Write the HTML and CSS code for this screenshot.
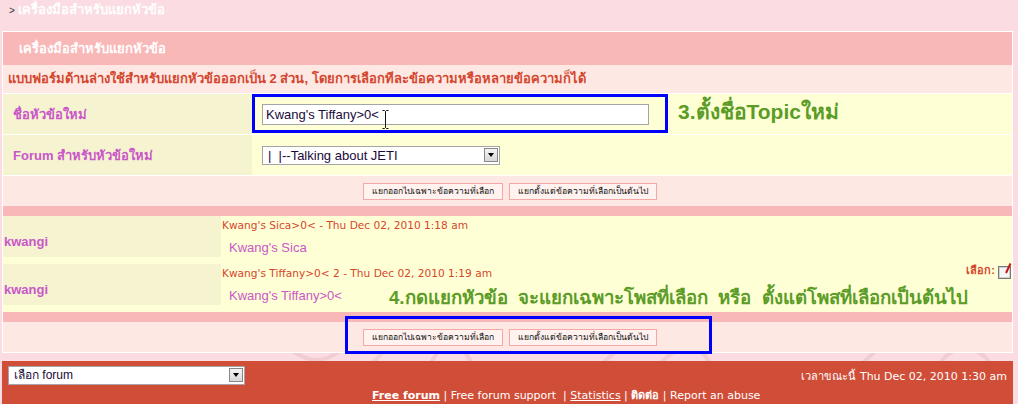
FILE: index.html
```html
<!DOCTYPE html>
<html lang="th">
<head>
    <meta charset="UTF-8">
    <title>เครื่องมือสำหรับแยกหัวข้อ</title>
    <link rel="stylesheet" href="styles.css">
</head>
<body>
    <svg class="watermark" width="760" height="40" viewBox="0 0 760 40">
        <g fill="none" stroke="#f1ccd0" stroke-width="4" stroke-linecap="round">
            <path d="M20 10 C40 30 60 38 80 20"/>
            <path d="M110 36 L140 4"/>
            <path d="M170 36 C180 10 200 10 210 30"/>
            <path d="M340 36 L372 6"/>
            <path d="M400 34 C420 12 440 12 450 34"/>
            <path d="M600 36 L630 6"/>
            <path d="M680 34 C690 14 720 14 730 34"/>
        </g>
    </svg>

    <div class="crumb"><span class="crumb-arrow">&gt;</span> <span class="crumb-text">เครื่องมือสำหรับแยกหัวข้อ</span></div>

    <div class="panel">
        <div class="head">เครื่องมือสำหรับแยกหัวข้อ</div>
        <div class="desc">แบบฟอร์มด้านล่างใช้สำหรับแยกหัวข้อออกเป็น 2 ส่วน, โดยการเลือกทีละข้อความหรือหลายข้อความก็ได้</div>

        <div class="field">
            <div class="label">ชื่อหัวข้อใหม่</div>
            <div class="value">
                <span class="textbox">Kwang's Tiffany&gt;0&lt;
                    <svg class="ibeam" width="7" height="19" viewBox="0 0 7 19">
                        <path d="M0.5 0.5 H2.5 L3.5 1.5 L4.5 0.5 H6.5 M3.5 1.5 V17.5 M0.5 18.5 H2.5 L3.5 17.5 L4.5 18.5 H6.5" stroke="#111" fill="none"/>
                    </svg>
                </span>
            </div>
        </div>
        <div class="field">
            <div class="label">Forum สำหรับหัวข้อใหม่</div>
            <div class="value"><span class="selectbox sel-forum">|&nbsp;&nbsp;|--Talking about JETI<span class="drop"></span></span></div>
        </div>
        <div class="actions">
            <span class="btn">แยกออกไปเฉพาะข้อความที่เลือก</span>
            <span class="btn">แยกตั้งแต่ข้อความที่เลือกเป็นต้นไป</span>
        </div>
        <div class="sep"></div>

        <div class="post">
            <div class="author">kwangi</div>
            <div class="post-main">
                <div class="post-title">Kwang's Sica&gt;0&lt; - Thu Dec 02, 2010 1:18 am</div>
                <div class="post-body">Kwang's Sica</div>
            </div>
        </div>
        <div class="gap"></div>
        <div class="post">
            <div class="author">kwangi</div>
            <div class="post-main">
                <div class="post-title">Kwang's Tiffany&gt;0&lt; 2 - Thu Dec 02, 2010 1:19 am</div>
                <div class="post-body">Kwang's Tiffany&gt;0&lt;</div>
                <div class="pick">เลือก:
                    <svg class="check" width="14" height="16" viewBox="0 0 14 16">
                        <rect x="0.5" y="3.5" width="12" height="12" fill="#eeeeee" stroke="#777"/>
                        <rect x="1.5" y="4.5" width="10" height="10" fill="#f6f6f6" stroke="#cfcfcf"/>
                        <path d="M8 10 L12.5 0.5" stroke="#c4161c" stroke-width="2" fill="none"/>
                    </svg>
                </div>
            </div>
        </div>
        <div class="gap"></div>
        <div class="sep"></div>
        <div class="actions">
            <span class="btn">แยกออกไปเฉพาะข้อความที่เลือก</span>
            <span class="btn">แยกตั้งแต่ข้อความที่เลือกเป็นต้นไป</span>
        </div>
    </div>

    <div class="footer">
        <div class="footer-top">
            <span class="selectbox sel-jump">เลือก forum<span class="drop"></span></span>
            <span class="clock">เวลาขณะนี้ Thu Dec 02, 2010 1:30 am</span>
        </div>
        <div class="links">
            <a class="strong">Free forum</a> | Free forum support &nbsp;| <a>Statistics</a> | <b>ติดต่อ</b> | Report an abuse
        </div>
    </div>

    <!-- คำอธิบายในภาพ -->
    <div class="mark mark-name"></div>
    <div class="mark mark-btns"></div>
    <div class="note note-name">3.ตั้งชื่อTopicใหม่</div>
    <div class="note note-split">4.กดแยกหัวข้อ&nbsp; จะแยกเฉพาะโพสที่เลือก&nbsp; หรือ&nbsp; ตั้งแต่โพสที่เลือกเป็นต้นไป</div>
</body>
</html>
```

FILE: styles.css
```css
body {
    margin: 0;
    background: #fadce2;
    font-family: "Liberation Sans", Arial, sans-serif;
    font-size: 13px;
    color: #000;
    position: relative;
    height: 404px;
    overflow: hidden;
}
.watermark {
    position: absolute;
    left: 260px;
    top: 330px;
}
.crumb {
    position: relative;
    height: 31px;
    padding-left: 9px;
    line-height: 20px;
}
.crumb-arrow {
    font-size: 10px;
    color: #333;
}
.crumb-text {
    color: #fff;
    font-weight: bold;
    font-size: 13px;
}
.panel {
    position: relative;
    margin-left: 2px;
    width: 1009px;
    border: 1px solid #fff;
    display: flex;
    flex-direction: column;
}
.head {
    height: 33px;
    line-height: 33px;
    background: #f8b8b8;
    color: #fff;
    font-weight: bold;
    padding-left: 16px;
}
.desc {
    height: 28px;
    line-height: 28px;
    background: #fde8e4;
    color: #d4462e;
    font-weight: bold;
    padding-left: 5px;
    border-bottom: 1px solid #fff;
}
.field {
    display: flex;
    height: 40px;
    border-bottom: 1px solid #fff;
}
.label {
    width: 239px;
    padding-left: 10px;
    background: #f5f3d0;
    color: #c957c9;
    font-weight: bold;
    display: flex;
    align-items: center;
}
.value {
    flex: 1;
    background: #ffffd5;
    padding-left: 10px;
    display: flex;
    align-items: center;
}
.textbox {
    position: relative;
    width: 382px;
    height: 19px;
    line-height: 19px;
    border: 1px solid #a5a5a5;
    background: #fff;
    padding-left: 3px;
    color: #1a0a3a;
}
.ibeam {
    position: absolute;
    left: 119px;
    top: 5px;
}
.selectbox {
    position: relative;
    display: inline-block;
    height: 17px;
    line-height: 17px;
    border: 1px solid #a5a5a5;
    background: #fff;
    padding-left: 5px;
    color: #1a0a3a;
    box-sizing: border-box;
}
.sel-forum {
    width: 238px;
    height: 19px;
}
.drop {
    position: absolute;
    right: 1px;
    top: 1px;
    width: 14px;
    height: 14px;
    border: 1px solid #888;
    background: linear-gradient(#f4f4f4, #d8d8d8);
    box-sizing: border-box;
}
.drop::after {
    content: "";
    position: absolute;
    left: 3px;
    top: 4px;
    border-left: 3px solid transparent;
    border-right: 3px solid transparent;
    border-top: 4px solid #000;
}
.actions {
    height: 30px;
    background: #fde8e4;
    display: flex;
    justify-content: center;
    align-items: center;
    gap: 6px;
    padding-left: 4px;
}
.btn {
    height: 15px;
    line-height: 15px;
    padding: 0 8px;
    border: 1px solid #f4a8a8;
    background: #fff2ef;
    font-size: 8.6px;
    color: #111;
}
.sep {
    height: 10px;
    background: #f8b8b8;
}
.gap {
    height: 7px;
    background: #ffffd5;
}
.post {
    display: flex;
    height: 41px;
}
.author {
    width: 218px;
    padding-left: 1px;
    background: #f5f3d0;
    color: #c957c9;
    font-weight: bold;
    display: flex;
    align-items: center;
    padding-top: 10px;
    box-sizing: border-box;
}
.post-main {
    flex: 1;
    position: relative;
    background: #ffffd5;
    padding-left: 1px;
}
.post-title {
    font-family: "DejaVu Sans", Verdana, sans-serif;
    font-size: 10.6px;
    color: #d4462e;
    padding-top: 2px;
    line-height: 14px;
}
.post-body {
    color: #c957c9;
    padding: 8px 0 0 7px;
    line-height: 16px;
}
.pick {
    position: absolute;
    right: 0;
    top: -3px;
    color: #d4462e;
    font-size: 11px;
    font-weight: bold;
    display: flex;
    align-items: flex-end;
    gap: 3px;
}
.footer {
    position: relative;
    margin: 8px 0 0 2px;
    width: 1011px;
    height: 50px;
    background: #d04e38;
    color: #fff;
    font-family: "DejaVu Sans", Verdana, sans-serif;
    font-size: 11px;
    padding: 5px 6px 0;
    box-sizing: border-box;
}
.footer-top {
    display: flex;
    justify-content: space-between;
    align-items: center;
}
.sel-jump {
    width: 237px;
    height: 19px;
    font-family: "Liberation Sans", Arial, sans-serif;
    font-size: 12px;
    line-height: 17px;
}
.links {
    padding-left: 364px;
    margin-top: 1px;
}
.links a {
    text-decoration: underline;
}
.links .strong {
    font-weight: bold;
}
.mark {
    position: absolute;
    border: 3px solid #0000ff;
}
.mark-name {
    left: 252px;
    top: 94px;
    width: 410px;
    height: 33px;
}
.mark-btns {
    left: 345px;
    top: 316px;
    width: 361px;
    height: 32px;
}
.note {
    position: absolute;
    color: #5b9c28;
    font-weight: bold;
}
.note-name {
    left: 678px;
    top: 95px;
    font-size: 21px;
}
.note-split {
    left: 389px;
    top: 283px;
    font-size: 18.6px;
}
```
